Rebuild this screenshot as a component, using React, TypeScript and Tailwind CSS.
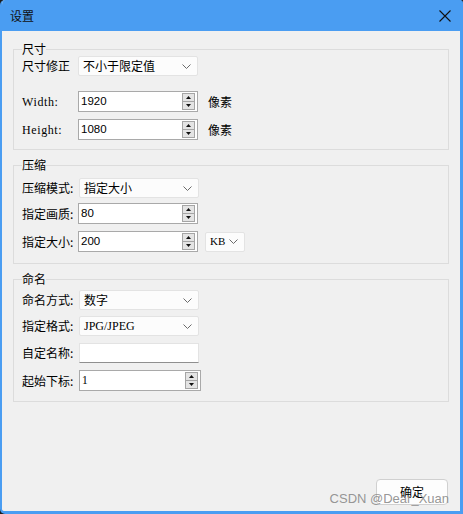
import React from 'react'

const cjk = "font-['Noto_Sans_CJK_SC','Noto_Sans',sans-serif]"
const serif = "font-['Liberation_Serif','Times_New_Roman',serif]"
const sans = "font-['Liberation_Sans',Arial,sans-serif]"

function Chevron() {
  return (
    <svg width="9" height="5" viewBox="0 0 9 5" className="shrink-0">
      <path d="M0.5 0.5 L4.5 4.5 L8.5 0.5" fill="none" stroke="#6b6b6b" strokeWidth="1" />
    </svg>
  )
}

function Combo({ value, className = 'w-[120px] pl-[4px]', font = cjk }: { value: string; className?: string; font?: string }) {
  return (
    <div
      className={`flex h-[20px] items-center justify-between rounded-[2px] border border-[#e3e3e3] bg-[#fcfcfc] pr-[6px] ${className}`}
    >
      <span className={`leading-none text-black ${font}`}>{value}</span>
      <Chevron />
    </div>
  )
}

function Spin({ value, font = sans, className = 'w-[120px]' }: { value: string; font?: string; className?: string }) {
  return (
    <div className={`flex h-[21px] items-center border border-[#a9a9a9] bg-white pl-[2px] pr-[2px] ${className}`}>
      <span className={`flex-1 text-[11.5px] leading-none text-black ${font}`}>{value}</span>
      <div className="flex h-[17px] w-[13px] flex-col border border-[#a5a5a5] bg-[#e4e4e4]">
        <div className="flex flex-1 items-center justify-center border-b border-[#a5a5a5]">
          <svg width="5" height="3" viewBox="0 0 5 3">
            <path d="M0 3 L2.5 0 L5 3 Z" fill="#111" />
          </svg>
        </div>
        <div className="flex flex-1 items-center justify-center">
          <svg width="5" height="3" viewBox="0 0 5 3">
            <path d="M0 0 L2.5 3 L5 0 Z" fill="#111" />
          </svg>
        </div>
      </div>
    </div>
  )
}

function Row({ label, children, labelFont = cjk, className = '' }: { label: string; children: React.ReactNode; labelFont?: string; className?: string }) {
  return (
    <div className={`flex items-center ${className}`}>
      <span className={`w-[56px] shrink-0 whitespace-nowrap text-[12px] leading-none text-black ${labelFont}`}>{label}</span>
      {children}
    </div>
  )
}

function Group({ title, children, className = '' }: { title: string; children: React.ReactNode; className?: string }) {
  return (
    <fieldset className={`mx-[11px] border border-[#dcdcdc] px-[8px] ${className}`}>
      <legend className={`text-[12px] leading-[14px] text-black ${cjk}`}>{title}</legend>
      {children}
    </fieldset>
  )
}

export default function App() {
  return (
    <div className="relative h-[514px] w-[463px] bg-[#1c1c1c]">
      <div className="flex h-full flex-col overflow-hidden rounded-tl-[5px] rounded-bl-[5px] rounded-tr-[3px] border-b-[3px] border-l-[2px] border-r-[3px] border-[#4a9df2] bg-[#f0f0f0]">
        {/* title bar */}
        <div className="flex h-[31px] shrink-0 items-center justify-between bg-[#4a9df2] pl-[8px] pr-[9px]">
          <span className={`text-[12px] text-[#111] ${cjk}`}>设置</span>
          <svg width="12" height="12" viewBox="0 0 12 12">
            <path d="M0.5 0.5 L11.5 11.5 M11.5 0.5 L0.5 11.5" stroke="#111" strokeWidth="1.1" />
          </svg>
        </div>

        <Group title="尺寸" className="mt-[11px] pb-[9px]">
          <Row label="尺寸修正">
            <Combo value="不小于限定值" font={`${cjk} text-[12px]`} />
          </Row>
          <Row label="Width:" labelFont={`${serif} text-[11.5px] tracking-[0.6px]`} className="mt-[15px]">
            <Spin value="1920" />
            <span className={`ml-[10px] text-[12px] text-black ${cjk}`}>像素</span>
          </Row>
          <Row label="Height:" labelFont={`${serif} text-[11.5px] tracking-[0.6px]`} className="mt-[7px]">
            <Spin value="1080" />
            <span className={`ml-[10px] text-[12px] text-black ${cjk}`}>像素</span>
          </Row>
        </Group>

        <Group title="压缩" className="mt-[8px] pb-[11px]">
          <Row label="压缩模式:" className="mt-[6px]">
            <Combo value="指定大小" font={`${cjk} text-[12px]`} className="ml-px w-[120px] pl-[4px]" />
          </Row>
          <Row label="指定画质:" className="mt-[5px]">
            <Spin value="80" />
          </Row>
          <Row label="指定大小:" className="mt-[7px]">
            <Spin value="200" />
            <Combo value="KB" font={`${serif} text-[11px]`} className="ml-[7px] w-[40px] pl-[4px]" />
          </Row>
        </Group>

        <Group title="命名" className="mt-[8px] pb-[10px]">
          <Row label="命名方式:" className="mt-[4px]">
            <Combo value="数字" font={`${cjk} text-[12px]`} className="ml-[1px] w-[120px] pl-[4px]" />
          </Row>
          <Row label="指定格式:" className="mt-[6px]">
            <Combo value="JPG/JPEG" font={`${serif} text-[12px]`} className="ml-[1px] w-[120px] pl-[4px]" />
          </Row>
          <Row label="自定名称:" className="mt-[7px]">
            <div className="ml-[1px] h-[20px] w-[120px] border border-[#e3e3e3] border-b-[#8f8f8f] bg-white" />
          </Row>
          <Row label="起始下标:" className="mt-[7px]">
            <Spin value="1" font={serif} className="ml-[1px] w-[122px]" />
          </Row>
        </Group>

        <div className="flex-1" />
        <div className="flex justify-end pb-[6px] pr-[12px]">
          <button className={`h-[26px] w-[72px] rounded-[4px] border border-[#d0d0d0] bg-[#fdfdfd] text-[12px] text-black ${cjk}`}>
            确定
          </button>
        </div>
      </div>
      <span className={`pointer-events-none absolute bottom-[9px] right-[14px] text-[13px] leading-none text-[#8a8a8a]/90 ${sans}`}>
        CSDN @Dear_Xuan
      </span>
    </div>
  )
}
